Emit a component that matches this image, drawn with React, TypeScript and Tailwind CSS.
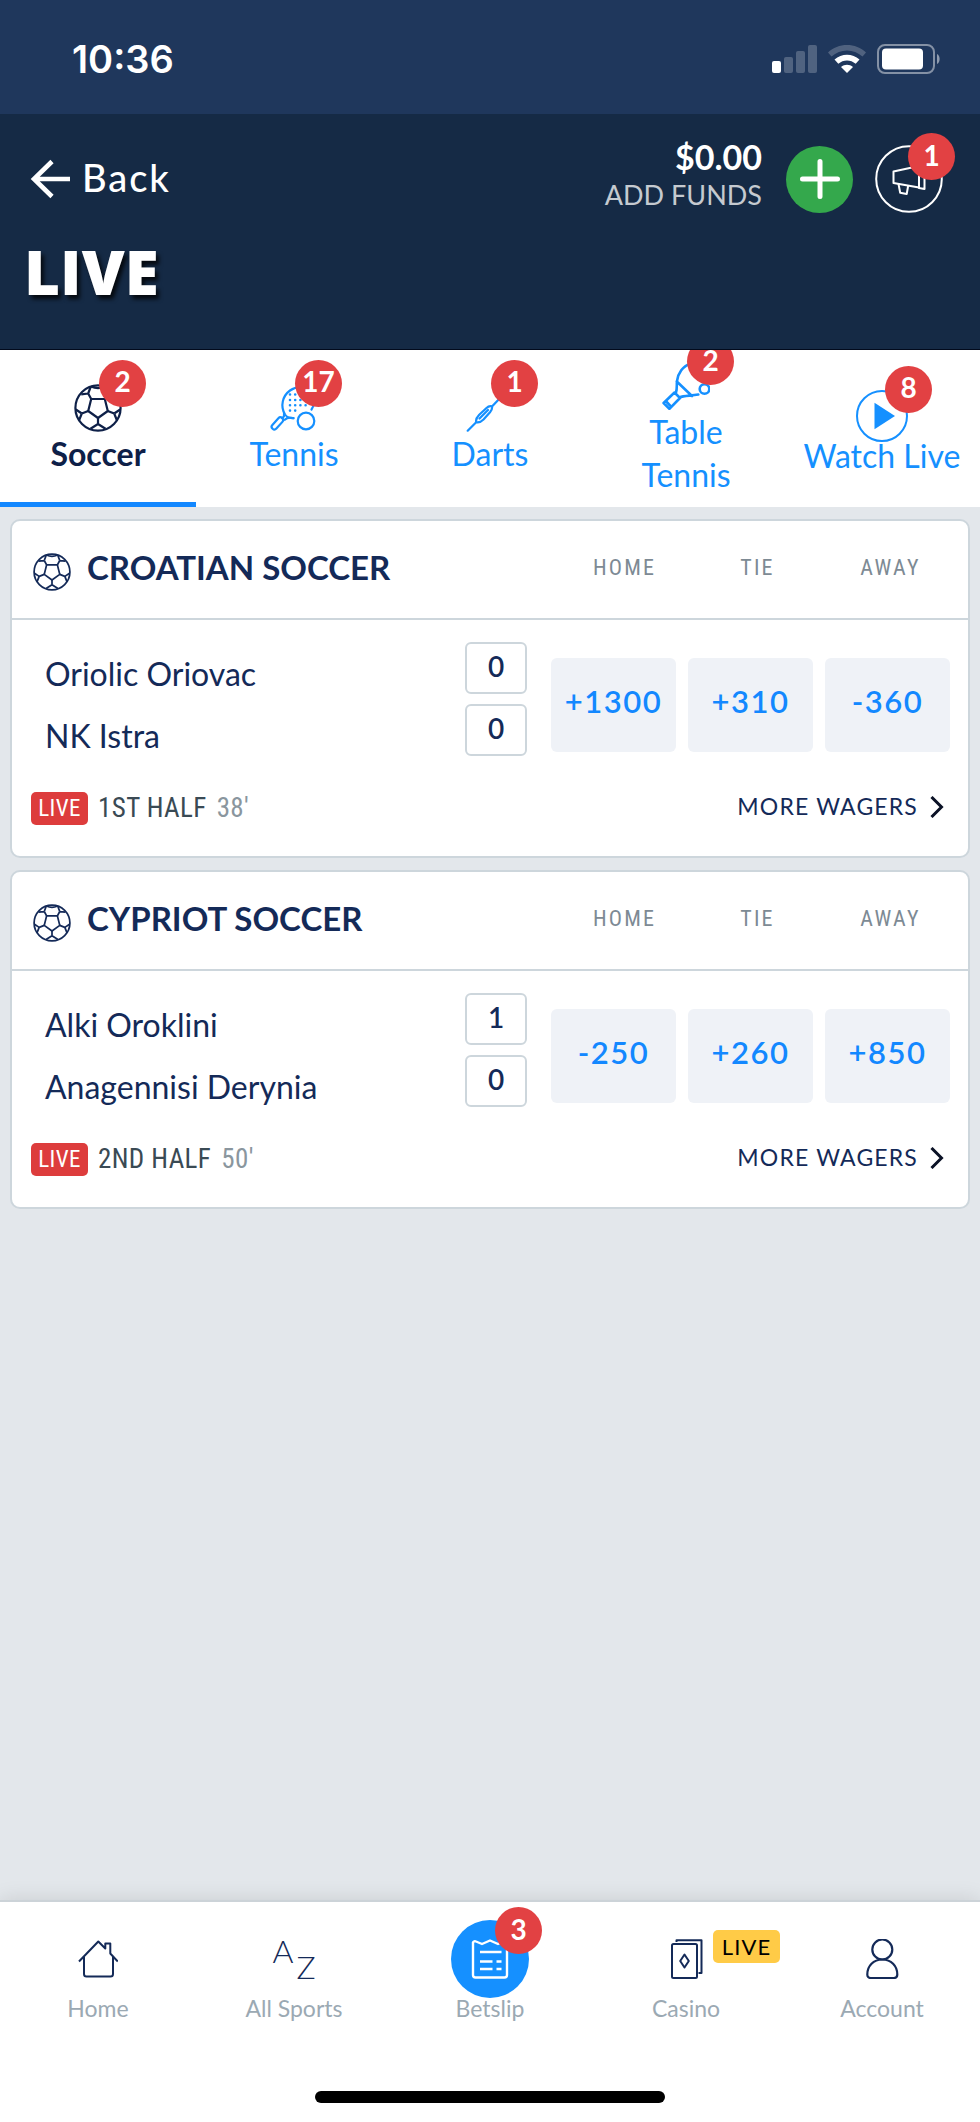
import type { ReactNode } from "react";

type Game = {
  league: string;
  teams: { name: string; score: number }[];
  odds: string[];
  period: string;
  clock: string;
};

const games: Game[] = [
  {
    league: "CROATIAN SOCCER",
    teams: [
      { name: "Oriolic Oriovac", score: 0 },
      { name: "NK Istra", score: 0 },
    ],
    odds: ["+1300", "+310", "-360"],
    period: "1ST HALF",
    clock: "38'",
  },
  {
    league: "CYPRIOT SOCCER",
    teams: [
      { name: "Alki Oroklini", score: 1 },
      { name: "Anagennisi Derynia", score: 0 },
    ],
    odds: ["-250", "+260", "+850"],
    period: "2ND HALF",
    clock: "50'",
  },
];

const narrow = "font-['Liberation_Sans_Narrow','Roboto_Condensed',Roboto,sans-serif]";

function Badge({ children, className }: { children: ReactNode; className: string }) {
  return (
    <span
      className={`absolute flex size-[47px] items-center justify-center rounded-full bg-[#e24143] pb-1 text-[28px] leading-none font-bold tracking-normal text-white ${className}`}
    >
      {children}
    </span>
  );
}

function SoccerIcon({ className, weight }: { className: string; weight: number }) {
  return (
    <svg viewBox="0 0 48 48" className={className} fill="none" stroke="currentColor" strokeWidth={weight} strokeLinejoin="round" aria-hidden="true">
      <circle cx="24" cy="24" r="22.6" />
      <path d="M17.2 15h13.6l3 12L24 34l-9.8-7z" />
      <path d="M17.2 15l-3-5.5M14.2 9.5l-7 .8M14.2 9.5l2.6-7M30.8 15l3-5.5M33.8 9.5l7 .8M33.8 9.5l-2.6-7" />
      <path d="M14.2 27l-6.4 2.5M7.8 29.5l-6-4M7.8 29.5L5 36.5M33.8 27l6.4 2.5M40.2 29.5l6-4M40.2 29.5l2.8 7" />
      <path d="M24 34v6M24 40l-7.500 4.800M24 40l7.500 4.800" />
      <path d="M17 2.500c4.500 2.200 9.500 2.200 14 0" />
    </svg>
  );
}

function TennisIcon() {
  return (
    <svg viewBox="0 0 48 48" className="size-12" fill="none" stroke="currentColor" strokeWidth="2.200" strokeLinecap="round" aria-hidden="true">
      <path d="M23.500 34c-2.500.4-6.500-.6-8.500-3.500C10 22 12.500 12 20 6.500 27 1.500 37 2 42 8c4 5 3.500 12-.5 17.500" />
      <path d="M14 29.500c.5 2-.3 3.800-2 4.700M23.500 34.300c-3-1-6.500-.7-8.700 1.500" />
      <rect x="-2.700" y="-7.200" width="5.400" height="14.400" rx="2.700" transform="translate(7.400 39.400) rotate(42)" />
      <circle cx="36" cy="37" r="8.300" />
      <g strokeWidth="2.600" strokeDasharray="0 5.200">
        <path d="M20 10.500h16M20 16h16M20 21.300h16M20 26.600h6" />
      </g>
    </svg>
  );
}

function DartIcon() {
  return (
    <svg viewBox="0 0 48 48" className="size-12" fill="none" stroke="currentColor" strokeWidth="2.200" strokeLinecap="round" strokeLinejoin="round" aria-hidden="true">
      <path d="M1.700 46.700l8.500-8.500M10.200 38.200c-.8-3 .8-5.200 3-7.500l7-6.500c2-1.800 4-2.300 5.800-1.800.4 2-.3 3.800-2 5.800l-6.500 7.300c-2.200 2.200-4.500 3.500-7.300 2.700zM13.500 34.500L22 26M26 22.400L36 12M36 12V5l8-4v6h4l-5 6z" />
    </svg>
  );
}

function TableTennisIcon() {
  return (
    <svg viewBox="0 0 48 48" className="size-12" fill="none" stroke="currentColor" strokeWidth="2.600" strokeLinecap="round" strokeLinejoin="round" aria-hidden="true">
      <path d="M14 30.500c1.300-3.500.5-7.500 1-11.500C16 11 21 4 28 2c8-2 16 4 16 14M14.800 19.500L30 34M17.300 35.500c5-2 11-1.500 19-3" />
      <path d="M12.500 30.500L1.600 41l5.800 5.800L18 36zM3.800 39l5.500 5.800" />
      <circle cx="42.500" cy="27" r="4.800" />
    </svg>
  );
}

function PlayIcon() {
  return (
    <svg viewBox="0 0 52 52" className="size-[52px]" aria-hidden="true">
      <circle cx="26" cy="26" r="25" fill="none" stroke="currentColor" strokeWidth="2" />
      <path d="M18.500 12.800v26.400L39 26z" fill="currentColor" />
    </svg>
  );
}

function StatusBar() {
  return (
    <div className="flex h-[114px] items-center justify-between bg-[#1f375c] pt-1 pr-[39px] pl-[72px] text-white">
      <time className="font-[Inter,sans-serif] text-[38px] leading-none font-semibold">10:36</time>
      <div className="flex items-center gap-[11px]">
        <svg viewBox="0 0 45 28" className="h-7 w-[45px]" fill="currentColor" aria-label="Signal">
          <rect x="0" y="16" width="9" height="12" rx="2" />
          <g opacity=".22">
            <rect x="12" y="12" width="9" height="16" rx="2" />
            <rect x="24" y="6" width="9" height="22" rx="2" />
            <rect x="36" y="0" width="9" height="28" rx="2" />
          </g>
        </svg>
        <svg viewBox="0 0 38 28" className="h-7 w-[38px]" aria-label="Wi-Fi">
          <path d="M0 7.500C10-2.500 28-2.500 38 7.500L34.500 11.500C25.500 3.500 12.500 3.500 3.500 11.500z" fill="currentColor" opacity=".22" />
          <path d="M6.500 14.500c7-6.500 18-6.500 25 0l-3.800 4.300c-5-4.500-12.400-4.500-17.400 0z" fill="currentColor" />
          <path d="M13 22c3.500-3 8.500-3 12 0l-6 6z" fill="currentColor" />
        </svg>
        <svg viewBox="0 0 64 30" className="h-[30px] w-16" aria-label="Battery">
          <rect x="1" y="1" width="56" height="28" rx="7" fill="none" stroke="currentColor" strokeWidth="2" opacity=".45" />
          <rect x="5" y="4.500" width="41" height="21" rx="4" fill="currentColor" />
          <path d="M60 10c3.500 1.500 3.500 8.500 0 10z" fill="currentColor" opacity=".5" />
        </svg>
      </div>
    </div>
  );
}

function Header() {
  return (
    <header className="border-b border-[#020a1c] bg-[#152a45] pt-6 pb-12 text-white">
      <div className="flex items-center justify-between pr-[37px] pl-[30px]">
        <a href="#back" className="flex items-center gap-3 text-[38px] leading-none font-medium tracking-wider">
          <svg viewBox="0 0 40 40" className="mt-1 size-10" fill="none" stroke="currentColor" strokeWidth="4.600" aria-hidden="true">
            <path d="M22 2.500L4 20l18 17.500M4 20h36" />
          </svg>
          Back
        </a>
        <div className="flex items-center">
          <a href="#funds" className="mr-6 flex flex-col items-end pb-[2px] leading-[38px]">
            <span className="text-[34px] font-bold">$0.00</span>
            <span className="text-[27px] text-[#c5cad0]">ADD FUNDS</span>
          </a>
          <button type="button" aria-label="Add funds" className="mt-1 mr-[22px] flex size-[67px] items-center justify-center rounded-full bg-[#34a84c]">
            <svg viewBox="0 0 40 40" className="size-10" stroke="currentColor" strokeWidth="5" strokeLinecap="round" aria-hidden="true">
              <path d="M20 2.500v35M2.500 20h35" />
            </svg>
          </button>
          <button type="button" aria-label="Announcements" className="relative mt-1 size-[68px]">
            <svg viewBox="0 0 68 68" className="size-[68px]" fill="none" stroke="currentColor" strokeWidth="2" strokeLinejoin="round" aria-hidden="true">
              <circle cx="34" cy="34" r="32.800" />
              <path d="M18.500 26.500L44 21v21.500l-25.500-4.500z" />
              <path d="M44 19h5.500v25L44 43z" />
              <path d="M23.500 39l1.700 8.800 6.500 1.200 1.500-8.500" />
            </svg>
            <Badge className="-top-3 -right-3">1</Badge>
          </button>
        </div>
      </div>
      <h1 className="mt-[25px] pl-6 font-['Open_Sans',sans-serif] text-[62px] leading-[60px] font-extrabold [text-shadow:3px_4px_4px_rgba(0,0,0,0.8)]">
        LIVE
      </h1>
    </header>
  );
}

const tabs: { label: string; count: number; icon: ReactNode; box: string }[] = [
  { label: "Soccer", count: 2, icon: <SoccerIcon className="size-12" weight={2.2} />, box: "size-12" },
  { label: "Tennis", count: 17, icon: <TennisIcon />, box: "size-12" },
  { label: "Darts", count: 1, icon: <DartIcon />, box: "size-12" },
  { label: "Table\nTennis", count: 2, icon: <TableTennisIcon />, box: "size-12" },
  { label: "Watch Live", count: 8, icon: <PlayIcon />, box: "mt-2 -mb-2 size-[52px]" },
];

function SportTabs() {
  return (
    <nav aria-label="Sports" className="grid grid-cols-5 overflow-hidden bg-white">
      {tabs.map((tab, i) => (
        <a
          key={tab.label}
          href="#sport"
          aria-current={i === 0 ? "page" : undefined}
          className={`flex flex-col items-center justify-center border-b-[5px] pt-3 pb-[6px] ${
            i === 0 ? "border-[#1388ff] font-bold text-[#0e2048]" : "border-transparent text-[#1590ff]"
          }`}
        >
          <span className={`relative block ${tab.box}`}>
            {tab.icon}
            <Badge className="-top-6 -right-6">{tab.count}</Badge>
          </span>
          <span className="text-center text-[32px] leading-[43px] whitespace-pre-line">{tab.label}</span>
        </a>
      ))}
    </nav>
  );
}

function GameCard({ game }: { game: Game }) {
  return (
    <section className="rounded-[10px] border-2 border-[#cdd6dc] bg-white text-[#142a58]">
      <div className="flex h-[99px] items-center border-b-2 border-[#cdd6dc] pr-[11px] pl-[21px]">
        <SoccerIcon className="mt-1 size-[38px]" weight={2.2} />
        <h2 className="flex-1 pb-1 pl-4 text-[33px] leading-none font-bold">{game.league}</h2>
        <div className={`grid grid-cols-3 pb-1 text-center text-[22px] leading-none tracking-widest text-[#7d8a94] ${narrow}`}>
          <span className="w-[133px]">HOME</span>
          <span className="w-[133px]">TIE</span>
          <span className="w-[133px]">AWAY</span>
        </div>
      </div>
      <div className="pt-[22px] pr-[18px] pb-[31px] pl-[19px]">
        <div className="flex items-end">
          <ul className="flex flex-1 flex-col gap-[10px]">
            {game.teams.map((team) => (
              <li key={team.name} className="flex justify-between">
                <span className="pt-3 pl-[14px] text-[32px] leading-10">{team.name}</span>
                <span className="flex h-[52px] w-[62px] items-center justify-center rounded-md border-2 border-[#cdd6dc] pb-1 text-[28px] leading-none font-semibold">
                  {team.score}
                </span>
              </li>
            ))}
          </ul>
          <div className="mb-1 ml-6 grid grid-cols-3 gap-3">
            {game.odds.map((price) => (
              <button
                key={price}
                type="button"
                className="h-[94px] w-[125px] rounded-md bg-[#eff2f7] pb-2 text-[31px] font-semibold tracking-wider text-[#1388ff]"
              >
                {price}
              </button>
            ))}
          </div>
        </div>
        <div className="mt-9 flex h-[33px] items-center justify-between">
          <div className={`flex items-center tracking-wide ${narrow}`}>
            <span className="flex h-[33px] w-[57px] items-center justify-center rounded-[5px] bg-[#dd3c3c] pb-px text-[23px] leading-none text-white">
              LIVE
            </span>
            <span className="ml-[10px] text-[27px] leading-none text-[#3a4a54]">{game.period}</span>
            <span className="ml-[10px] text-[27px] leading-none text-[#8a969e]">{game.clock}</span>
          </div>
          <a href="#wagers" className="flex items-center gap-3 pr-[6px] pb-1 text-[23px] leading-none tracking-wider">
            MORE WAGERS
            <svg viewBox="0 0 14 22" className="h-[22px] w-[14px]" fill="none" stroke="#0b1226" strokeWidth="3" aria-hidden="true">
              <path d="M1.500 1l10 10-10 10" />
            </svg>
          </a>
        </div>
      </div>
    </section>
  );
}

const line = { fill: "none", stroke: "currentColor", strokeWidth: 2, strokeLinejoin: "round" as const };

function BottomNav() {
  const items: { label: string; icon: ReactNode }[] = [
    {
      label: "Home",
      icon: (
        <svg viewBox="0 0 40 40" className="size-10" {...line} aria-hidden="true">
          <path d="M1 22.500L20.300 2.500l7 7V4.500h5V14.500l7.500 8" />
          <path d="M6 18v17a2.500 2.500 0 0 0 2.500 2.500h24a2.500 2.500 0 0 0 2.500-2.500V18" />
        </svg>
      ),
    },
    {
      label: "All Sports",
      icon: (
        <span className="flex h-[42px] items-start gap-[3px] text-[32px] leading-[26px] font-light" aria-hidden="true">
          <span>A</span>
          <span className="self-end">Z</span>
        </span>
      ),
    },
    {
      label: "Betslip",
      icon: (
        <span className="relative flex size-[78px] items-center justify-center rounded-full bg-[#1590ff] text-white">
          <svg viewBox="0 0 40 40" className="size-10" fill="none" stroke="currentColor" strokeWidth="2.400" strokeLinejoin="round" aria-hidden="true">
            <path d="M3 36V3.500a2 2 0 0 1 3-1l6 2.500L20 1.500 28 5 34 2.500a2 2 0 0 1 3 1V36a2.500 2.500 0 0 1-2.500 2.500h-29A2.500 2.500 0 0 1 3 36z" />
            <path d="M10 13h21.500M10 22.500h12.500M26.500 22.500h5M10 30h12.500M26.500 30h5" />
          </svg>
          <Badge className="-top-[13px] -right-[13px]">3</Badge>
        </span>
      ),
    },
    {
      label: "Casino",
      icon: (
        <span className="relative block">
          <svg viewBox="0 0 40 40" className="size-10" {...line} aria-hidden="true">
            <rect x="6" y="5" width="25" height="34" rx="1.500" />
            <path d="M10.500 3V1.200h25V34h-3M18.500 15.500l4.300 6.500-4.300 6.500-4.300-6.500z" />
          </svg>
          <span className="absolute -top-[9px] left-[47px] flex h-[33px] w-[67px] items-center justify-center rounded-[5px] bg-[#ffcb47] text-[22px] leading-none tracking-wider text-black">
            LIVE
          </span>
        </span>
      ),
    },
    {
      label: "Account",
      icon: (
        <svg viewBox="0 0 40 40" className="size-10" {...line} strokeWidth={2.2} aria-hidden="true">
          <circle cx="20.300" cy="10.500" r="10" />
          <path d="M5.300 35.500C5.300 27 11.500 20.500 20.300 20.500S35.300 27 35.300 35.500c0 2.300-1.200 3.500-3.300 3.500H8.600c-2.100 0-3.300-1.200-3.300-3.500z" />
        </svg>
      ),
    },
  ];

  return (
    <footer className="border-t-2 border-[#ccd3d8] bg-white pt-[18px] pb-[19px] shadow-[0_0_20px_rgba(0,0,0,0.12)]">
      <nav aria-label="Main" className="grid grid-cols-5">
        {items.map((item) => (
          <a key={item.label} href="#nav" className="flex flex-col items-center text-[#142a58]">
            <span className="flex h-[78px] items-center justify-center">{item.icon}</span>
            <span className="text-[23px] leading-5 text-[#9ba9b3]">{item.label}</span>
          </a>
        ))}
      </nav>
      <div className="mx-auto mt-[73px] h-3 w-[350px] rounded-full bg-black" />
    </footer>
  );
}

export default function App() {
  return (
    <div className="flex min-h-screen flex-col bg-[#e3e7eb] font-[Lato,sans-serif]">
      <StatusBar />
      <Header />
      <SportTabs />
      <main className="flex flex-1 flex-col gap-3 px-[10px] pt-3">
        {games.map((game) => (
          <GameCard key={game.league} game={game} />
        ))}
      </main>
      <BottomNav />
    </div>
  );
}
